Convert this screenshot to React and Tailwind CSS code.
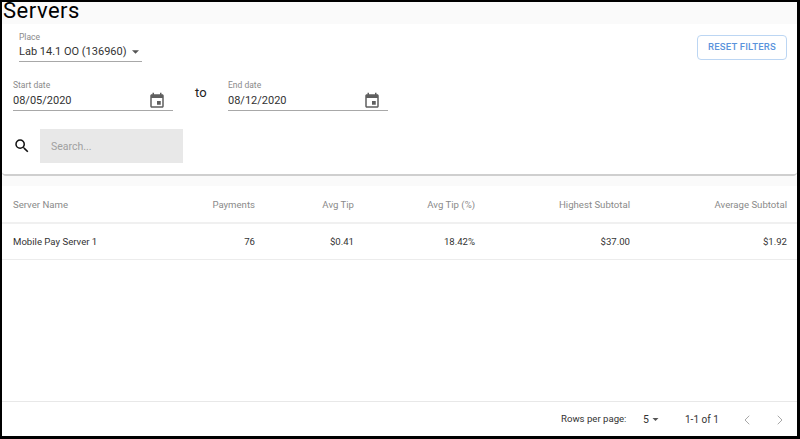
import React from 'react';
import { ChevronLeft, ChevronRight } from 'lucide-react';

const rowGrid = 'grid grid-cols-[153px_100px_99px_121px_155px_157px] items-center whitespace-nowrap';

const headers = ['Payments', 'Avg Tip', 'Avg Tip (%)', 'Highest Subtotal', 'Average Subtotal'];
const values = ['76', '$0.41', '18.42%', '$37.00', '$1.92'];

function Caret({ className }) {
  return (
    <svg viewBox="0 0 10 5" className={className} fill="currentColor">
      <path d="M0 0 L10 0 L5 5 Z" />
    </svg>
  );
}

function CalendarIcon() {
  return (
    <svg viewBox="0 0 24 24" className="w-[18px] h-[18px] text-[#5f5f5f]" fill="currentColor">
      <path d="M17 12h-5v5h5v-5zM16 1v2H8V1H6v2H5c-1.11 0-1.99.9-1.99 2L3 19c0 1.1.89 2 2 2h14c1.1 0 2-.9 2-2V5c0-1.1-.9-2-2-2h-1V1h-2zm3 18H5V8h14v11z" />
    </svg>
  );
}

function DateField({ label, value }) {
  return (
    <div className="w-[160px] h-[34px] pt-[2px] border-b border-[#a8a8a8] relative">
      <div className="text-[8.5px] leading-[12px] text-[#8a8a8a]">{label}</div>
      <div className="text-[11px] leading-[16px] mt-[2px] text-[#333]">{value}</div>
      <div className="absolute right-[7px] top-[15px]">
        <CalendarIcon />
      </div>
    </div>
  );
}

export default function App() {
  return (
    <div className="w-[800px] h-[439px] border-t-2 border-l-2 border-r-[3px] border-b-[3px] border-black bg-white flex flex-col font-['Roboto',sans-serif]">
      <div className="h-[22px] bg-[#fafafa] shrink-0">
        <h1 className="text-[22px] leading-[18px] tracking-[0.5px] pl-[1px] text-black">Servers</h1>
      </div>

      <div className="h-[152px] shrink-0 border-b-2 border-[#cfcfcf] rounded-b-[4px] flex justify-between">
        <div className="flex flex-col pl-[11px]">
          <div className="ml-[6px] mt-[7px] w-[123px] h-[31px] border-b border-[#a8a8a8] whitespace-nowrap">
            <div className="text-[8.5px] leading-[12px] text-[#8a8a8a]">Place</div>
            <div className="flex items-center text-[11px] leading-[16px] mt-[1px] text-[#333]">
              Lab 14.1 OO (136960)
              <Caret className="w-[7px] h-[4px] ml-[5px] text-[#555]" />
            </div>
          </div>
          <div className="flex mt-[15px]">
            <DateField label="Start date" value="08/05/2020" />
            <div className="w-[55px] pl-[22px] text-[13px] leading-[16px] mt-[8px] text-[#222]">to</div>
            <DateField label="End date" value="08/12/2020" />
          </div>
          <div className="flex items-center mt-[18px]">
            <svg viewBox="0 0 24 24" className="w-[18px] h-[18px]" fill="#111">
              <path d="M15.5 14h-.79l-.28-.27A6.47 6.47 0 0 0 16 9.5 6.5 6.5 0 1 0 9.5 16c1.61 0 3.09-.59 4.23-1.57l.27.28v.79l5 4.99L20.49 19l-4.99-5zm-6 0C7.01 14 5 11.99 5 9.5S7.01 5 9.5 5 14 7.01 14 9.5 11.99 14 9.5 14z" />
            </svg>
            <input
              placeholder="Search..."
              className="ml-[9px] w-[143px] h-[34px] bg-[#e8e8e8] pl-[11px] text-[10.5px] placeholder:text-[#a0a0a0] outline-none"
            />
          </div>
        </div>
        <button className="mt-[11px] mr-[10px] w-[90px] h-[25px] border border-[#bcd6f3] rounded-[4px] text-[#5a93dc] text-[9.5px] font-medium tracking-[0.2px] whitespace-nowrap">
          RESET FILTERS
        </button>
      </div>

      <div className="h-[10px] bg-[#fafafa] shrink-0"></div>

      <div className={`${rowGrid} h-[38px] pt-[3px] border-b-2 border-[#f0f0f0] text-[9.6px] text-[#8a8a8a] shrink-0`}>
        <div className="pl-[11px]">Server Name</div>
        {headers.map((h) => (
          <div key={h} className="text-right">{h}</div>
        ))}
      </div>
      <div className={`${rowGrid} h-[36px] pt-[1px] border-b border-[#ececec] text-[9.6px] text-[#333] shrink-0`}>
        <div className="pl-[11px]">Mobile Pay Server 1</div>
        {values.map((v) => (
          <div key={v} className="text-right">{v}</div>
        ))}
      </div>

      <div className="flex-1"></div>

      <div className="h-[35px] pt-[1px] border-t border-[#e8e8e8] shrink-0 flex items-center text-[9.6px] text-[#333] whitespace-nowrap">
        <div className="ml-[559px] w-[66px]">Rows per page:</div>
        <div className="ml-[16px] w-[9px] text-[10.5px]">5</div>
        <Caret className="w-[7px] h-[3px] text-[#555]" />
        <div className="ml-[26px] w-[34px] text-[10px]">1-1 of 1</div>
        <ChevronLeft className="ml-[20px] w-[16px] h-[16px] text-[#a8a8a8]" strokeWidth={1.5} />
        <ChevronRight className="ml-[17px] w-[16px] h-[16px] text-[#a8a8a8]" strokeWidth={1.5} />
      </div>
    </div>
  );
}
